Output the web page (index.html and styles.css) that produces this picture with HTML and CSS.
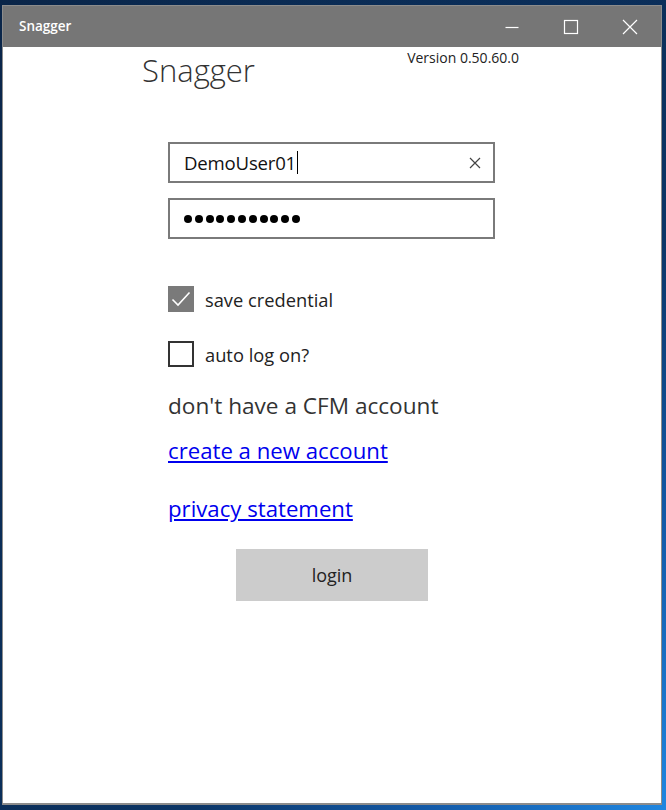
FILE: index.html
```html
<!DOCTYPE html>
<html>
<head>
<meta charset="utf-8">
<link rel="stylesheet" href="styles.css">
</head>
<body>
<div class="desktop">
  <div class="window">
    <div class="titlebar">
      <span class="title">Snagger</span>
      <div class="controls">
        <span class="ctl">
          <svg width="16" height="16" viewBox="0 0 16 16"><path d="M1.5 8.5h13" stroke="#fff" stroke-width="1.2" fill="none"/></svg>
        </span>
        <span class="ctl">
          <svg width="16" height="16" viewBox="0 0 16 16"><rect x="1.5" y="1.5" width="13" height="13" stroke="#fff" stroke-width="1.2" fill="none"/></svg>
        </span>
        <span class="ctl">
          <svg width="16" height="16" viewBox="0 0 16 16"><path d="M1 1L15 15M15 1L1 15" stroke="#fff" stroke-width="1.2" fill="none"/></svg>
        </span>
      </div>
    </div>
    <div class="content">
      <div class="header">
        <h1 class="app-name">Snagger</h1>
        <span class="version">Version 0.50.60.0</span>
      </div>
      <div class="form">
        <div class="field user">
          <span class="value">DemoUser01</span><span class="caret"></span>
          <span class="clear">
            <svg width="12" height="12" viewBox="0 0 12 12"><path d="M1 1L11 11M11 1L1 11" stroke="#444" stroke-width="1.2" fill="none"/></svg>
          </span>
        </div>
        <div class="field pass">
          <span class="dots"><i></i><i></i><i></i><i></i><i></i><i></i><i></i><i></i><i></i><i></i><i></i></span>
        </div>
        <label class="check first">
          <span class="box checked">
            <svg width="26" height="26" viewBox="0 0 26 26"><path d="M4.5 13.5L10 19L21.5 6.5" stroke="#fff" stroke-width="1.6" fill="none"/></svg>
          </span>
          <span class="check-label">save credential</span>
        </label>
        <label class="check second">
          <span class="box"></span>
          <span class="check-label">auto log on?</span>
        </label>
        <p class="note">don't have a CFM account</p>
        <a class="link create" href="#">create a new account</a>
        <a class="link privacy" href="#">privacy statement</a>
        <div class="btn-row">
          <button class="login">login</button>
        </div>
      </div>
    </div>
  </div>
</div>
</body>
</html>
```
FILE: styles.css
```css
html, body {
  margin: 0;
  padding: 0;
  height: 100%;
}
body {
  font-family: "Open Sans", "Noto Sans", sans-serif;
}
.desktop {
  width: 666px;
  height: 810px;
  box-sizing: border-box;
  padding: 5px 4px 5px 2px;
  background: radial-gradient(ellipse at 100% 100%, #1f86e0 0%, #135aa8 25%, #0b3566 50%, #0a2548 100%);
}
.window {
  height: 100%;
  box-sizing: border-box;
  border: 1px solid #8c8c8c;
  border-bottom-width: 2px;
  background: #fff;
  display: flex;
  flex-direction: column;
}
.titlebar {
  height: 41px;
  background: #767676;
  display: flex;
  align-items: center;
  justify-content: space-between;
  color: #fff;
}
.title {
  font-size: 13.5px;
  font-weight: 600;
  margin-left: 16px;
  margin-top: -2px;
}
.controls {
  display: flex;
  align-items: center;
  margin-right: 23px;
}
.ctl {
  width: 16px;
  height: 16px;
  margin-left: 43px;
  display: flex;
}
.ctl:first-child { margin-left: 0; }
.content {
  flex: 1;
  display: flex;
  flex-direction: column;
}
.header {
  display: flex;
  align-items: flex-start;
  padding-left: 139px;
  padding-right: 142px;
}
.app-name {
  margin: 4px 0 0 0;
  font-size: 31px;
  font-weight: 300;
  color: #333;
  line-height: 38px;
}
.version {
  margin-left: auto;
  margin-top: 1px;
  font-size: 14px;
  color: #222;
  line-height: 20px;
}
.form {
  padding-left: 165px;
  width: 327px;
  display: flex;
  flex-direction: column;
}
.field {
  height: 41px;
  box-sizing: border-box;
  border: 2px solid #7a7a7a;
  display: flex;
  align-items: center;
  padding-left: 14px;
  padding-right: 12px;
}
.user { margin-top: 53px; }
.pass { margin-top: 15px; }
.value {
  font-size: 18.6px;
  color: #111;
  letter-spacing: -0.2px;
}
.caret {
  width: 1px;
  height: 23px;
  background: #000;
  margin-left: 1px;
}
.clear {
  margin-left: auto;
  display: flex;
}
.dots {
  display: flex;
  gap: 2.8px;
}
.dots i {
  width: 8px;
  height: 8px;
  border-radius: 50%;
  background: #000;
}
.check {
  display: flex;
  align-items: center;
}
.first { margin-top: 47px; }
.second { margin-top: 29px; }
.box {
  width: 26px;
  height: 26px;
  box-sizing: border-box;
  border: 2px solid #333;
  display: flex;
}
.box.checked {
  border: none;
  background: #7a7a7a;
}
.check-label {
  margin-left: 11px;
  font-size: 18.3px;
  color: #222;
}
.note {
  margin: 25px 0 0 0;
  font-size: 22.6px;
  color: #333;
  line-height: 28px;
}
.link {
  font-size: 22.2px;
  color: #0000ee;
  line-height: 28px;
  align-self: flex-start;
}
.create { margin-top: 17px; }
.privacy { margin-top: 30px; }
.btn-row {
  display: flex;
  padding-left: 68px;
  margin-top: 26px;
}
.login {
  width: 192px;
  height: 52px;
  border: none;
  background: #cccccc;
  font-family: inherit;
  font-size: 18px;
  color: #222;
}
```
